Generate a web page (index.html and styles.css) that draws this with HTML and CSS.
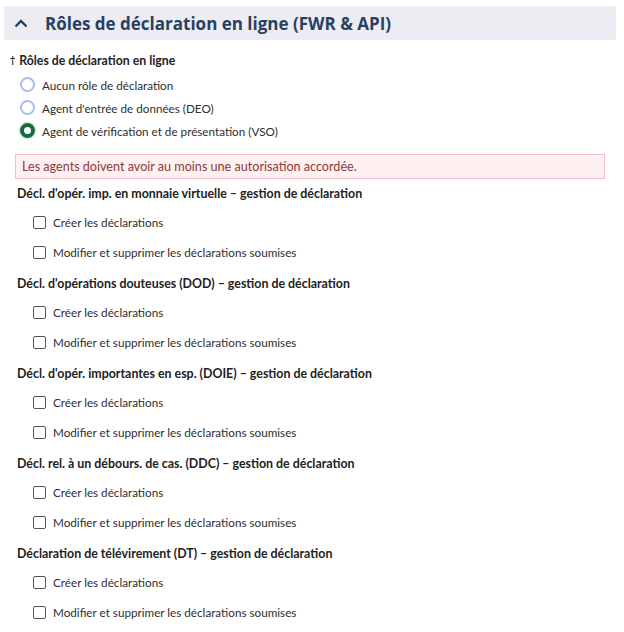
FILE: index.html
```html
<!DOCTYPE html>
<html lang="fr">
<head>
<meta charset="utf-8">
<link rel="stylesheet" href="styles.css">
</head>
<body>
<section class="panel">
  <header class="panel-head">
    <svg class="chev" width="14" height="9" viewBox="0 0 14 9"><path d="M1.5 7.5 L7 2 L12.5 7.5" fill="none" stroke="#284162" stroke-width="2.4"/></svg>
    <h1 class="title">Rôles de déclaration en ligne (FWR &amp; API)</h1>
  </header>
  <div class="body">
    <div class="field-label"><span class="dagger">†</span> Rôles de déclaration en ligne</div>
    <div class="radios">
      <label class="radio"><span class="rbtn"></span>Aucun rôle de déclaration</label>
      <label class="radio"><span class="rbtn"></span>Agent d'entrée de données (DEO)</label>
      <label class="radio"><span class="rbtn on"></span>Agent de vérification et de présentation (VSO)</label>
    </div>
    <div class="alert">Les agents doivent avoir au moins une autorisation accordée.</div>

    <div class="group">
      <div class="group-title">Décl. d'opér. imp. en monnaie virtuelle – gestion de déclaration</div>
      <label class="check"><span class="cbox"></span>Créer les déclarations</label>
      <label class="check"><span class="cbox"></span>Modifier et supprimer les déclarations soumises</label>
    </div>
    <div class="group">
      <div class="group-title">Décl. d'opérations douteuses (DOD) – gestion de déclaration</div>
      <label class="check"><span class="cbox"></span>Créer les déclarations</label>
      <label class="check"><span class="cbox"></span>Modifier et supprimer les déclarations soumises</label>
    </div>
    <div class="group">
      <div class="group-title">Décl. d'opér. importantes en esp. (DOIE) – gestion de déclaration</div>
      <label class="check"><span class="cbox"></span>Créer les déclarations</label>
      <label class="check"><span class="cbox"></span>Modifier et supprimer les déclarations soumises</label>
    </div>
    <div class="group">
      <div class="group-title">Décl. rel. à un débours. de cas. (DDC) – gestion de déclaration</div>
      <label class="check"><span class="cbox"></span>Créer les déclarations</label>
      <label class="check"><span class="cbox"></span>Modifier et supprimer les déclarations soumises</label>
    </div>
    <div class="group">
      <div class="group-title">Déclaration de télévirement (DT) – gestion de déclaration</div>
      <label class="check"><span class="cbox"></span>Créer les déclarations</label>
      <label class="check"><span class="cbox"></span>Modifier et supprimer les déclarations soumises</label>
    </div>
  </div>
</section>
</body>
</html>
```
FILE: styles.css
```css
html, body { margin: 0; padding: 0; background: #fff; }
body { font-family: Lato, "Open Sans", sans-serif; color: #2e2e2e; font-size: 11.7px; }

.panel { padding: 6px 8px 0 4px; }
.panel-head {
  display: flex; align-items: center;
  height: 34px; background: #edecf2;
  padding-left: 10px;
}
.chev { display: block; margin-right: 17px; }
.title { margin: 0; font-family: "Open Sans", sans-serif; font-size: 17px; font-weight: 700; color: #284162; }

.body { padding: 0 0 0 6px; }
.field-label { margin-top: 14px; font-weight: 700; font-size: 12.3px; color: #222; height: 14px; line-height: 14px; }
.dagger { font-size: 9px; font-weight: 700; position: relative; top: -2px; margin-right: 1px; }

.radios { display: flex; flex-direction: column; gap: 8px; margin-top: 9px; padding-left: 10px; }
.radio { display: flex; align-items: center; gap: 7px; height: 15px; }
.rbtn { width: 11px; height: 11px; border: 2px solid #a4bdf2; border-radius: 50%; box-sizing: content-box; }
.rbtn.on { width: 7px; height: 7px; border: 4px solid #156b3e; box-shadow: 0 0 2px #39b06b; }

.alert {
  margin: 16px 11px 0 5px; height: 23px; line-height: 23px;
  background: #fff0f1; border: 1px solid #f3c1c6;
  color: #8a3b3b; font-size: 12.6px; padding-left: 6px;
}

.group { margin-left: 7px; margin-top: 15px; }
.alert + .group { margin-top: 6px; }
.group-title { font-weight: 700; font-size: 12.4px; color: #222; height: 16px; line-height: 16px; padding-top: 1px; }
.check { display: flex; align-items: center; gap: 7px; margin-left: 16px; margin-top: 14px; height: 16px; }
.group-title + .check { margin-top: 12px; }
.cbox { width: 11px; height: 11px; border: 1.5px solid #555; border-radius: 2px; }
```
